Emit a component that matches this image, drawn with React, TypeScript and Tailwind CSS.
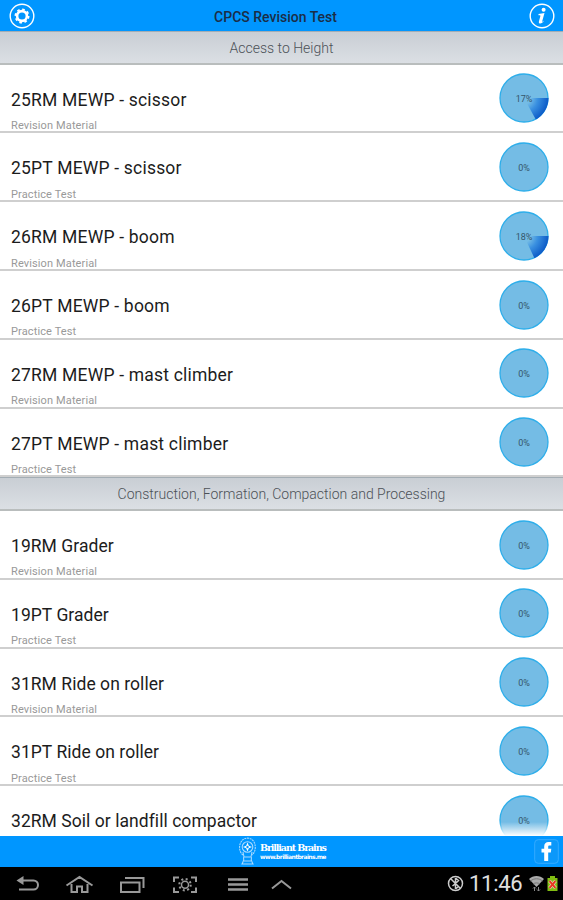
import React from 'react';

interface Test {
  title: string;
  kind?: 'Revision Material' | 'Practice Test';
  progress: number;
}

interface Section {
  heading: string;
  titleClass: string;
  tests: Test[];
}

const sections: Section[] = [
  {
    heading: 'Access to Height',
    titleClass: 'tracking-[0.2px]',
    tests: [
      { title: '25RM MEWP - scissor', kind: 'Revision Material', progress: 17 },
      { title: '25PT MEWP - scissor', kind: 'Practice Test', progress: 0 },
      { title: '26RM MEWP - boom', kind: 'Revision Material', progress: 18 },
      { title: '26PT MEWP - boom', kind: 'Practice Test', progress: 0 },
      { title: '27RM MEWP - mast climber', kind: 'Revision Material', progress: 0 },
      { title: '27PT MEWP - mast climber', kind: 'Practice Test', progress: 0 },
    ],
  },
  {
    heading: 'Construction, Formation, Compaction and Processing',
    titleClass: 'tracking-[0.05px]',
    tests: [
      { title: '19RM Grader', kind: 'Revision Material', progress: 0 },
      { title: '19PT Grader', kind: 'Practice Test', progress: 0 },
      { title: '31RM Ride on roller', kind: 'Revision Material', progress: 0 },
      { title: '31PT Ride on roller', kind: 'Practice Test', progress: 0 },
      { title: '32RM Soil or landfill compactor', progress: 0 },
    ],
  },
];

const ProgressPie: React.FC<{ value: number }> = ({ value }) => {
  const angle = (value / 100) * Math.PI * 2;
  const x = 25 + 24.5 * Math.cos(angle);
  const y = 25 + 24.5 * Math.sin(angle);

  return (
    <svg width="50" height="50" viewBox="0 0 50 50" className="shrink-0">
      <defs>
        <radialGradient id="slice" gradientUnits="userSpaceOnUse" cx="25" cy="25" r="25">
          <stop offset="0.25" stopColor="#74bce5" />
          <stop offset="0.55" stopColor="#3a90e0" />
          <stop offset="1" stopColor="#0a58c6" />
        </radialGradient>
      </defs>
      <circle cx="25" cy="25" r="24" fill="#74bce5" stroke="#2eaeea" strokeWidth="1.3" />
      {value > 0 && <path d={`M25 25H49.5A24.5 24.5 0 0 1 ${x} ${y}Z`} fill="url(#slice)" />}
      <text x="25" y="28.6" textAnchor="middle" className="fill-[#34566a] text-[9px]">
        {value}%
      </text>
    </svg>
  );
};

const TestRow: React.FC<{ test: Test; titleClass: string }> = ({ test, titleClass }) => (
  <li className="flex h-[68.8px] items-start justify-between border-b-2 border-[#cfcfcf] pl-[11px] pr-[14px]">
    <div className="pt-[23.1px]">
      <h3 className={`whitespace-nowrap text-[17.5px] leading-6 text-[#1c1c1c] ${titleClass}`}>{test.title}</h3>
      {test.kind && (
        <p className="mt-[7.3px] text-[11px] leading-[14px] tracking-[0.12px] text-[#999]">{test.kind}</p>
      )}
    </div>
    <div className="pt-[8.7px]">
      <ProgressPie value={test.progress} />
    </div>
  </li>
);

const GearIcon = () => (
  <svg width="26" height="26" viewBox="0 0 26 26" fill="none" stroke="#fff">
    <circle cx="13" cy="13" r="11.8" strokeWidth="1.4" />
    <circle cx="13" cy="13" r="4.9" strokeWidth="2.6" />
    <circle cx="13" cy="13" r="6.6" strokeWidth="1.8" strokeDasharray="2.6 2.58" />
  </svg>
);

const InfoIcon = () => (
  <svg width="26" height="26" viewBox="0 0 26 26" fill="none">
    <circle cx="13" cy="13" r="11.8" stroke="#fff" strokeWidth="1.4" />
    <circle cx="14.6" cy="6.8" r="2" fill="#fff" />
    <path d="M9.500 11l6-.9-2.300 8.200c-.2.8.6.5 2-.9-.8 2.500-6 4.800-5.300 1l1.500-5.500c.2-.8-.6-.8-1.900-.7z" fill="#fff" />
  </svg>
);

const BrainLogo = () => (
  <svg width="17" height="29" viewBox="0 0 17 29" fill="none" stroke="#a9daff" strokeWidth="1.1">
    <path d="M4 18C0 15 0 9 1.500 6 4-.5 13-.5 15.500 6 17 10 16.500 15 13 18" strokeDasharray="2 .7" />
    <circle cx="8.500" cy="10" r="5.300" />
    <path d="M4 15l1 5h7l1-5M4.500 20c1 3 0 4-1.500 7h11c-1.500-3-2.500-4-1.500-7M5 24h7" />
    <path d="M8.500 5.500l1.300 3.200 3.200 1.300-3.200 1.300-1.300 3.200-1.300-3.200L4 10l3.200-1.300z" fill="#fff" stroke="none" />
    <circle cx="8.500" cy="10" r="1.200" fill="#0795fa" stroke="none" />
  </svg>
);

const FacebookIcon = () => (
  <svg width="25" height="25" viewBox="0 0 25 25">
    <rect x=".7" y=".7" width="23.600" height="23.600" rx="3.500" fill="#0b98fa" stroke="#34abff" />
    <path d="M10.200 22v-8.600H7.500V9.800h2.700V7.500C10.200 4.500 11.800 3 14.500 3h2.800v3.600h-1.600c-1.200 0-1.500.5-1.500 1.400v1.800h3.100l-.5 3.600h-2.600V22z" fill="#fff" />
  </svg>
);

const SystemBar = () => (
  <nav className="flex h-[33px] shrink-0 items-center justify-between bg-black">
    <svg width="310" height="33" viewBox="0 0 310 33" fill="none" stroke="#999" strokeWidth="2">
      <path d="M20 13.500H33.500a4.500 4.500 0 0 1 0 9H19" />
      <path d="M16.500 13.500l7-4.500v9z" fill="#999" stroke="none" />
      <path d="M66.500 18.500L79.500 10 92.500 18.500M71.500 17V25h5.500v-5.500h5V25h5.500v-8" />
      <path d="M121 15.500h18.500v9.500H121zM125 11h18.500v10" />
      <path d="M174 15v-4.500h5M191 10.500h5V15M196 20.500V25h-5M179 25h-5v-4.500" />
      <circle cx="185" cy="17.700" r="3.500" strokeWidth="1.500" />
      <circle cx="185" cy="17.700" r="5.700" strokeDasharray="2 2.480" />
      <path d="M228 12.500h20M228 17.500h20M228 22.500h20" strokeWidth="2.400" />
      <path d="M272 21.500l9.500-7.500 9.500 7.500" />
    </svg>
    <div className="flex items-center pr-[5px]">
      <svg width="17" height="17" viewBox="0 0 17 17" fill="none" stroke="#ccc" strokeWidth="1.500">
        <circle cx="8.500" cy="8.500" r="7" />
        <path d="M3.500 3.500l10 10M8.500 3v11M8.500 3l3 2.500-3 3M5.500 11l3-2.500M8.500 14l2.500-2" />
      </svg>
      <span className="ml-[5px] w-[54px] whitespace-nowrap pt-px text-[22px] leading-8 tracking-[-0.3px] text-[#e0e0e0]">11:46</span>
      <svg width="15" height="17" viewBox="0 0 15 17" fill="none" className="ml-[6px]">
        <path d="M0 4C4 0 11 0 15 4l-7.500 8z" fill="#aaa" />
        <path d="M1.500 6c3.500-3 8.500-3 12 0M4 9c2-1.500 5-1.500 7 0" stroke="#777" />
        <path d="M5.500 16v-4M4 13.500L5.500 12 7 13.500M9.500 12v4M8 14.500L9.500 16l1.500-1.500" stroke="#888" />
      </svg>
      <svg width="11" height="17" viewBox="0 0 11 17" className="ml-[3px]">
        <path d="M3 1h5v2h2.500v13H.5V3H3z" fill="#82bd12" />
        <path d="M2.500 6l6 7M8.500 6l-6 7" stroke="#eee" strokeWidth="3.200" />
        <path d="M2.500 6l6 7M8.500 6l-6 7" stroke="#e83a20" strokeWidth="2" />
      </svg>
    </div>
  </nav>
);

const App: React.FC = () => (
  <div className="flex h-[900px] w-[563px] flex-col overflow-hidden bg-white font-['Roboto',sans-serif]">
    <header className="flex h-[31px] shrink-0 items-center justify-between bg-[#0096ff] pl-[9px] pr-[8px]">
      <GearIcon />
      <h1 className="mr-[13px] pt-[2px] text-[14px] font-medium leading-5 text-[#1b2d47]">CPCS Revision Test</h1>
      <InfoIcon />
    </header>

    <main className="relative min-h-0 flex-1 overflow-hidden">
      {sections.map((section) => (
        <section key={section.heading}>
          <h2 className="h-[33.6px] border-b-2 border-t border-b-[#b9bdbd] border-t-[#a3adb4] bg-linear-to-b from-[#c9ced4] to-[#dbdfe4] text-center text-[14px] font-light leading-[32px] text-[#4c5157]">
            {section.heading}
          </h2>
          <ul>
            {section.tests.map((test) => (
              <TestRow key={test.title} test={test} titleClass={section.titleClass} />
            ))}
          </ul>
        </section>
      ))}
      <div className="absolute bottom-0 right-0 h-[14px] w-[80px] bg-linear-to-b from-transparent to-white" />
    </main>

    <footer className="flex h-[31px] shrink-0 items-center bg-[#0096ff] pl-[239px] pr-[4px]">
      <BrainLogo />
      <div className="ml-[4px] flex-1 whitespace-nowrap text-white">
        <p className="font-['DejaVu_Serif',serif] text-[9.5px] font-bold leading-[10px] tracking-[-1.1px]">Brilliant Brains</p>
        <p className="font-['DejaVu_Sans',sans-serif] text-[6px] font-bold leading-[8px] tracking-[-0.6px]">www.brilliantbrains.me</p>
      </div>
      <FacebookIcon />
    </footer>

    <SystemBar />
  </div>
);

export default App;
